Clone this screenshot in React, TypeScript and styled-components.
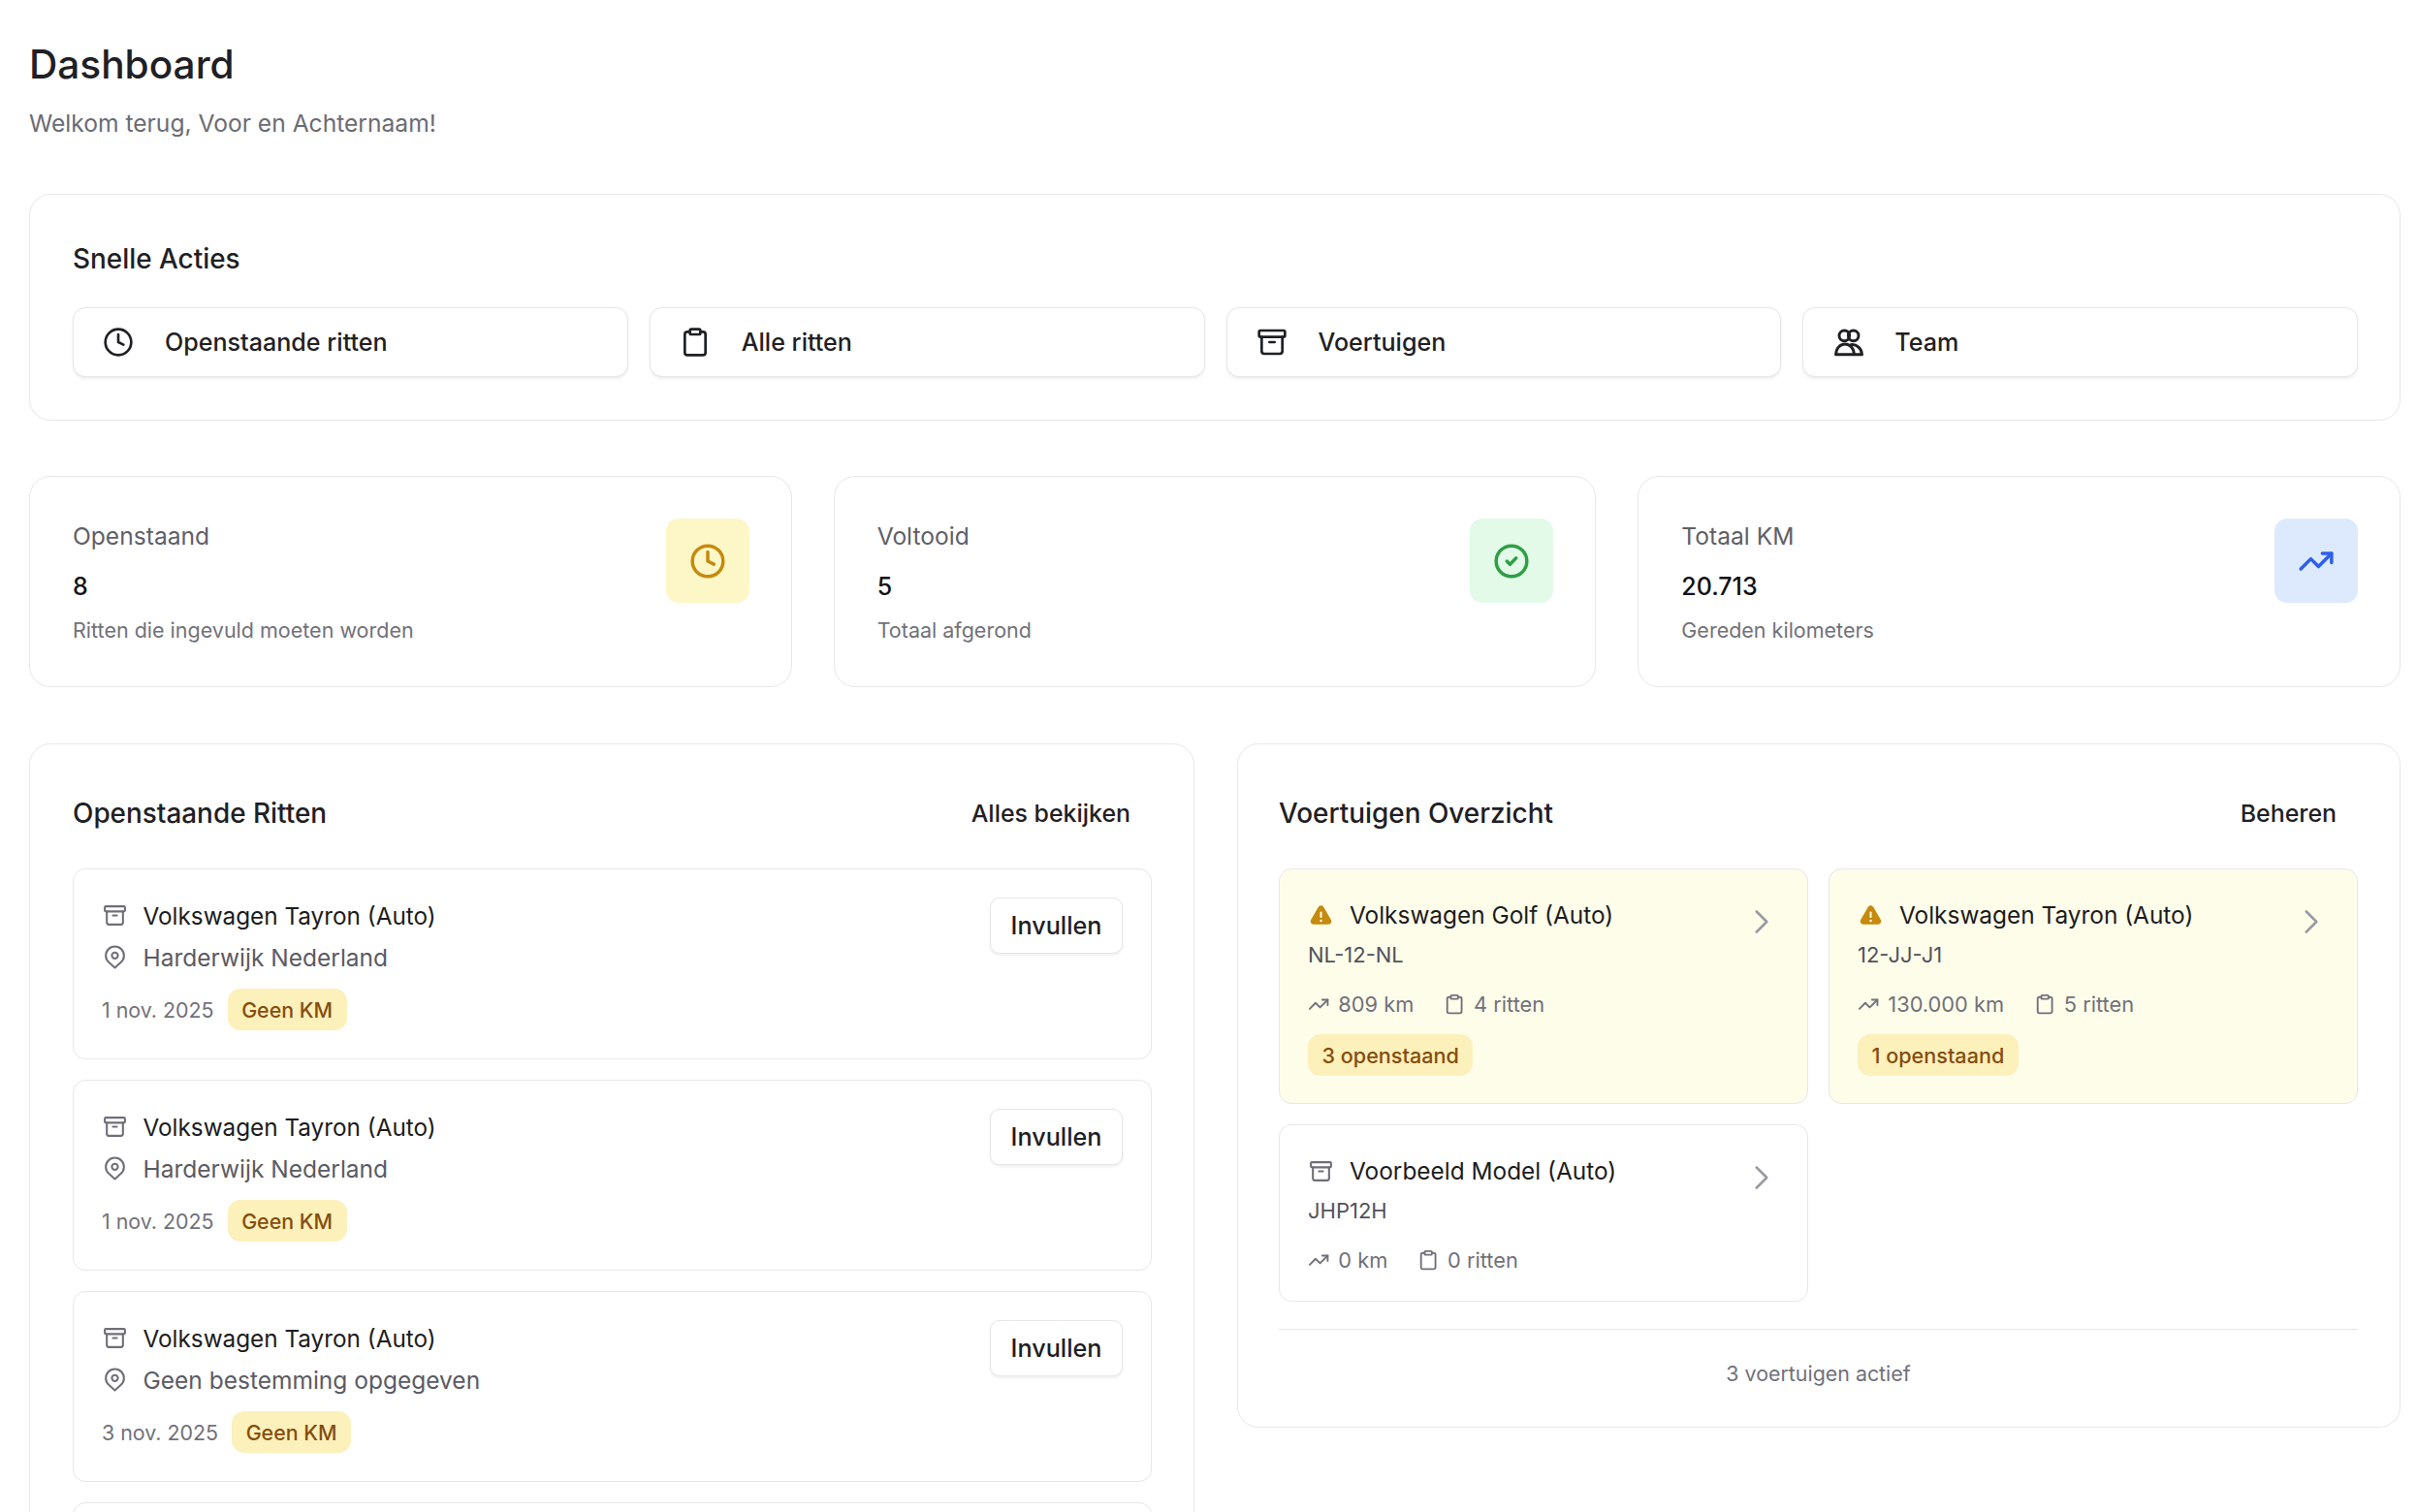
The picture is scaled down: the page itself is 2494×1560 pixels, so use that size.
import React from "react";
import styled, { createGlobalStyle } from "styled-components";
import { Archive, ChevronRight, CircleCheck, Clipboard, Clock, TrendingUp } from "lucide-react";

const Global = createGlobalStyle`
  html, body { margin: 0; padding: 0; background: #fff; overflow: hidden; height: 100%; }
  body { font-family: Inter, "Liberation Sans", sans-serif; color: #18181b; }
`;

const Page = styled.div`
  padding: 45px 18px 0 30px;
  height: 1560px;
  box-sizing: border-box;
  overflow: hidden;
`;
const Title = styled.h1`
  margin: 0;
  font-size: 40.6px;
  line-height: 44px;
  font-weight: 450;
  color: #1f2024;
`;
const Subtitle = styled.p`
  margin: 19px 0 0;
  font-size: 24.6px;
  line-height: 38px;
  color: #6b6b73;
`;
const Card = styled.section`
  background: #fff;
  border: 1.5px solid #e7e7e7;
  border-radius: 22px;
  box-sizing: border-box;
`;
const QuickCard = styled(Card)`
  margin-top: 54px;
  height: 234px;
  padding: 46px 43px 0 44px;
`;
const CardTitle = styled.h2`
  margin: 0;
  font-size: 27.9px;
  line-height: 40px;
  font-weight: 450;
  color: #1f2024;
`;
const QuickGrid = styled.div`
  margin-top: 30px;
  display: grid;
  grid-template-columns: repeat(4, 1fr);
  gap: 22px;
`;
const QuickButton = styled.button`
  display: flex;
  align-items: center;
  gap: 32px;
  height: 72px;
  padding: 0 30px;
  background: #fff;
  border: 1.5px solid #e7e7e7;
  border-radius: 13px;
  box-shadow: 0 1.5px 3px rgba(0, 0, 0, 0.07);
  font: 450 25.1px Inter, sans-serif;
  color: #1f2024;
  svg { width: 32px; height: 32px; flex: none; }
`;
const StatGrid = styled.div`
  margin-top: 57px;
  display: grid;
  grid-template-columns: repeat(3, 1fr);
  gap: 43px;
`;
const StatCard = styled(Card)`
  height: 218px;
  padding: 43px 43px 0 44px;
  display: flex;
  justify-content: space-between;
  align-items: flex-start;
`;
const StatText = styled.div`
  display: flex;
  flex-direction: column;
  margin-top: -1.5px;
`;
const StatLabel = styled.span`
  font-size: 24.6px;
  line-height: 38px;
  color: #5f5f68;
`;
const StatValue = styled.span`
  margin-top: 14.5px;
  font-size: 25px;
  line-height: 38px;
  font-weight: 450;
  color: #111114;
`;
const StatSub = styled.span`
  margin-top: 10px;
  font-size: 21.5px;
  line-height: 32px;
  color: #71717a;
`;
const tones = {
  yellow: { bg: "#fdf7c8", fg: "#c58a0e" },
  green: { bg: "#e3fae8", fg: "#2f9e44" },
  blue: { bg: "#dde9fd", fg: "#2f5fe8" },
};
const StatIcon = styled.div<{ $tone: keyof typeof tones }>`
  width: 86px;
  height: 87px;
  border-radius: 13px;
  display: flex;
  align-items: center;
  justify-content: center;
  background: ${(p) => tones[p.$tone].bg};
  color: ${(p) => tones[p.$tone].fg};
  svg { width: 38px; height: 38px; stroke-width: 2.2; }
`;
const Columns = styled.div`
  margin-top: 58px;
  display: grid;
  grid-template-columns: 1202px 1200px;
  gap: 44px;
  align-items: start;
`;
const PanelLeft = styled(Card)`
  padding: 0 43px 60px 44px;
`;
const PanelRight = styled(Card)`
  padding: 0 43px 0 42px;
  height: 706px;
`;
const PanelHead = styled.div`
  height: 128px;
  display: flex;
  align-items: center;
  justify-content: space-between;
  padding-top: 13px;
  box-sizing: border-box;
`;
const GhostButton = styled.button`
  border: 0;
  background: none;
  padding: 0 22px;
  font: 450 24.9px Inter, sans-serif;
  color: #1f2024;
`;
const RideList = styled.div`
  display: flex;
  flex-direction: column;
  gap: 21px;
`;
const RideCard = styled.article`
  height: 197px;
  box-sizing: border-box;
  border: 1.5px solid #e7e7e7;
  border-radius: 13px;
  padding: 26px 29px 0;
  display: flex;
  justify-content: space-between;
  align-items: flex-start;
`;
const RideBody = styled.div`
  display: flex;
  flex-direction: column;
`;
const IconRow = styled.div<{ $muted?: boolean }>`
  display: flex;
  align-items: center;
  gap: 16.5px;
  height: 43px;
  font-size: ${(p) => (p.$muted ? "24.5px" : "24.3px")};
  color: ${(p) => (p.$muted ? "#5b5b64" : "#1c1c20")};
  svg { width: 25px; height: 25px; margin-left: 1px; color: #6f6f79; flex: none; }
`;
const DateRow = styled.div`
  margin-top: 11px;
  display: flex;
  align-items: center;
  gap: 14px;
  font-size: 21.4px;
  color: #71717a;
`;
const Badge = styled.span`
  display: inline-flex;
  align-items: center;
  height: 43px;
  padding: 0 14.5px;
  border-radius: 13px;
  background: #fcf0bb;
  color: #854d0e;
  font-size: 21.4px;
  font-weight: 450;
`;
const FillButton = styled.button`
  margin-top: 3px;
  width: 137px;
  height: 58px;
  background: #fff;
  border: 1.5px solid #e7e7e7;
  border-radius: 10px;
  box-shadow: 0 1.5px 3px rgba(0, 0, 0, 0.07);
  font: 450 25.2px Inter, sans-serif;
  color: #1f2024;
`;
const VehicleGrid = styled.div`
  display: grid;
  grid-template-columns: 1fr 1fr;
  gap: 21px;
  align-items: start;
`;
const VehicleCard = styled.article<{ $warn?: boolean }>`
  position: relative;
  box-sizing: border-box;
  height: ${(p) => (p.$warn ? "243px" : "183px")};
  padding: 28px 29px 0;
  border: 1.5px solid #e7e7e7;
  border-radius: 13px;
  background: ${(p) => (p.$warn ? "#fefdea" : "#fff")};
`;
const VehicleHead = styled.div`
  display: flex;
  align-items: center;
  gap: 17px;
  height: 38px;
  padding-left: 1px;
  font-size: 24.4px;
  color: #1c1c20;
  svg { width: 25px; height: 25px; flex: none; color: #6f6f79; }
`;
const Plate = styled.div`
  margin-top: 3px;
  font-size: 22px;
  line-height: 38px;
  color: #52525b;
`;
const MetaRow = styled.div`
  margin-top: 14px;
  display: flex;
  gap: 30.5px;
  font-size: 21.8px;
  line-height: 36px;
  color: #71717a;
`;
const MetaItem = styled.span`
  display: inline-flex;
  align-items: center;
  gap: 9px;
  svg { width: 22.3px; height: 22.3px; }
`;
const VehicleBadge = styled(Badge)`
  margin-top: 13px;
  font-size: 21.6px;
`;
const Chevron = styled(ChevronRight)`
  position: absolute;
  top: 33px;
  right: 26px;
  width: 42px;
  height: 42px;
  stroke-width: 1.5;
  color: #9a9aa3;
`;
const PanelFoot = styled.div`
  margin-top: 28px;
  border-top: 1.5px solid #e7e7e7;
  padding-top: 27px;
  text-align: center;
  font-size: 21.4px;
  line-height: 36px;
  color: #71717a;
`;

const Warn = () => (
  <svg viewBox="0 0 24 24" fill="#c58a0e" style={{ color: "#c58a0e" }}>
    <path fillRule="evenodd" d="M9.4 3.6c1.15-2 4.05-2 5.2 0l7.35 12.75c1.15 2-.3 4.5-2.6 4.5H4.65c-2.3 0-3.75-2.5-2.6-4.5L9.4 3.6ZM12 8.2a1 1 0 0 0-1 1v4.2a1 1 0 1 0 2 0V9.2a1 1 0 0 0-1-1Zm0 7.9a1.2 1.2 0 1 0 0 2.4 1.2 1.2 0 0 0 0-2.4Z" />
  </svg>
);

const TeamIcon = () => (
  <svg viewBox="0 0 24 24" fill="none" stroke="currentColor" strokeWidth="2.2" strokeLinecap="round" strokeLinejoin="round" style={{ marginLeft: 1, marginRight: -1 }}>
    <circle cx="8.5" cy="7" r="4" />
    <circle cx="15.5" cy="7" r="4" />
    <path d="M2 21.5c0-4.4 3-8 7-8s7 3.6 7 8" />
    <path d="M13.5 14c4.5-.6 8.5 3 8.5 7.5" />
    <path d="M2 21.5h20" />
  </svg>
);

const PinIcon = () => (
  <svg viewBox="0 0 24 24" fill="none" stroke="currentColor" strokeWidth="2" strokeLinecap="round" strokeLinejoin="round">
    <path d="M12 22.5l-5.8-5.2a9 9 0 1 1 11.6 0L12 22.5Z" />
    <circle cx="12" cy="10.4" r="3" />
  </svg>
);

const rides = [
  { place: "Harderwijk Nederland", date: "1 nov. 2025" },
  { place: "Harderwijk Nederland", date: "1 nov. 2025" },
  { place: "Geen bestemming opgegeven", date: "3 nov. 2025" },
  { place: "Harderwijk Nederland", date: "3 nov. 2025" },
];

const vehicles = [
  { name: "Volkswagen Golf (Auto)", plate: "NL-12-NL", km: "809 km", trips: "4 ritten", open: "3 openstaand" },
  { name: "Volkswagen Tayron (Auto)", plate: "12-JJ-J1", km: "130.000 km", trips: "5 ritten", open: "1 openstaand" },
  { name: "Voorbeeld Model (Auto)", plate: "JHP12H", km: "0 km", trips: "0 ritten", open: "" },
];

export default function App() {
  return (
    <Page>
      <Global />
      <Title>Dashboard</Title>
      <Subtitle>Welkom terug, Voor en Achternaam!</Subtitle>
      <QuickCard>
        <CardTitle>Snelle Acties</CardTitle>
        <QuickGrid>
          <QuickButton><Clock />Openstaande ritten</QuickButton>
          <QuickButton><Clipboard />Alle ritten</QuickButton>
          <QuickButton><Archive />Voertuigen</QuickButton>
          <QuickButton><TeamIcon />Team</QuickButton>
        </QuickGrid>
      </QuickCard>
      <StatGrid>
        <StatCard>
          <StatText>
            <StatLabel>Openstaand</StatLabel>
            <StatValue>8</StatValue>
            <StatSub>Ritten die ingevuld moeten worden</StatSub>
          </StatText>
          <StatIcon $tone="yellow"><Clock /></StatIcon>
        </StatCard>
        <StatCard>
          <StatText>
            <StatLabel>Voltooid</StatLabel>
            <StatValue>5</StatValue>
            <StatSub>Totaal afgerond</StatSub>
          </StatText>
          <StatIcon $tone="green"><CircleCheck /></StatIcon>
        </StatCard>
        <StatCard>
          <StatText>
            <StatLabel>Totaal KM</StatLabel>
            <StatValue>20.713</StatValue>
            <StatSub>Gereden kilometers</StatSub>
          </StatText>
          <StatIcon $tone="blue"><TrendingUp /></StatIcon>
        </StatCard>
      </StatGrid>
      <Columns>
        <PanelLeft>
          <PanelHead>
            <CardTitle>Openstaande Ritten</CardTitle>
            <GhostButton>Alles bekijken</GhostButton>
          </PanelHead>
          <RideList>
            {rides.map((r, i) => (
              <RideCard key={i}>
                <RideBody>
                  <IconRow><Archive />Volkswagen Tayron (Auto)</IconRow>
                  <IconRow $muted><PinIcon />{r.place}</IconRow>
                  <DateRow>{r.date}<Badge>Geen KM</Badge></DateRow>
                </RideBody>
                <FillButton>Invullen</FillButton>
              </RideCard>
            ))}
          </RideList>
        </PanelLeft>
        <PanelRight>
          <PanelHead>
            <CardTitle>Voertuigen Overzicht</CardTitle>
            <GhostButton>Beheren</GhostButton>
          </PanelHead>
          <VehicleGrid>
            {vehicles.map((v) => (
              <VehicleCard key={v.name} $warn={!!v.open}>
                <VehicleHead>{v.open ? <Warn /> : <Archive />}{v.name}</VehicleHead>
                <Plate>{v.plate}</Plate>
                <MetaRow>
                  <MetaItem><TrendingUp />{v.km}</MetaItem>
                  <MetaItem><Clipboard />{v.trips}</MetaItem>
                </MetaRow>
                {v.open && <VehicleBadge>{v.open}</VehicleBadge>}
                <Chevron />
              </VehicleCard>
            ))}
          </VehicleGrid>
          <PanelFoot>3 voertuigen actief</PanelFoot>
        </PanelRight>
      </Columns>
    </Page>
  );
}
